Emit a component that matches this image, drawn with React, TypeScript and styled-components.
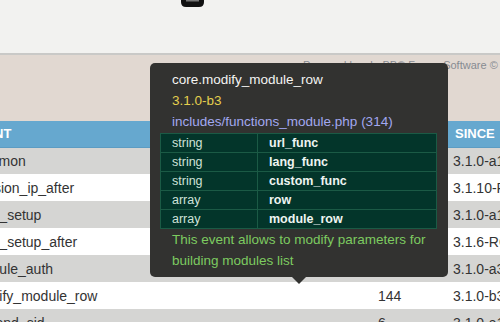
import React from "react";
import styled, { createGlobalStyle } from "styled-components";

const GlobalStyle = createGlobalStyle`
  html, body {
    margin: 0;
    padding: 0;
    overflow: hidden;
    background: #ffffff;
    font-family: "Liberation Sans", Arial, Helvetica, sans-serif;
  }
`;

const Page = styled.div`
  position: relative;
  width: 500px;
  height: 322px;
  overflow: hidden;
`;

const TopBar = styled.div`
  height: 53px;
  background: #f2f2f0;
  border-bottom: 2px solid #c9c9c7;
  padding-left: 181px;
  display: flex;
  align-items: flex-start;
`;

const Footer = styled.div`
  height: 66px;
  box-sizing: border-box;
  background: #e1d8d1;
  padding: 3px 0 0 303px;
  font-size: 11px;
  line-height: 14px;
  color: #878b91;
  white-space: nowrap;
`;

const TableWrap = styled.div`
  margin-left: -67px;
`;

const EventsTable = styled.table`
  border-collapse: collapse;
  table-layout: fixed;
  width: 620px;
  font-size: 14px;
  color: #333333;
`;

const HeadCell = styled.th<{ $pad?: number; $w: number }>`
  width: ${(p) => p.$w}px;
  height: 26px;
  padding: 0 0 0 ${(p) => p.$pad ?? 8}px;
  background: #66a8cf;
  border-bottom: 1px solid #5c9cc3;
  color: #ffffff;
  font-size: 13px;
  font-weight: bold;
  text-align: left;
  box-sizing: border-box;
  white-space: nowrap;
`;

const Row = styled.tr<{ $alt: boolean }>`
  background: ${(p) => (p.$alt ? "#ffffff" : "#d5d5d3")};
`;

const Cell = styled.td`
  height: 27px;
  padding: 0 0 0 8px;
  white-space: nowrap;
  overflow: hidden;
  box-sizing: border-box;
`;

const Tooltip = styled.div`
  position: absolute;
  left: 150px;
  top: 63px;
  width: 298px;
  box-sizing: border-box;
  padding: 6px 11px 6px 10px;
  background: #323230;
  border-radius: 5px;
  font-size: 13.5px;
  line-height: 21px;

  &::after {
    content: "";
    position: absolute;
    left: 142px;
    bottom: -7px;
    border-left: 7px solid transparent;
    border-right: 7px solid transparent;
    border-top: 7px solid #323230;
  }
`;

const TipLine = styled.div<{ $color: string }>`
  padding-left: 12px;
  color: ${(p) => p.$color};
  white-space: nowrap;
`;

const TipText = styled.div`
  padding-left: 12px;
  color: #7dcb60;
`;

const ParamTable = styled.table`
  margin-top: 1px;
  width: 277px;
  border-collapse: collapse;
  background: #03352a;
  font-size: 12.5px;
  table-layout: fixed;
`;

const ParamCell = styled.td<{ $name?: boolean }>`
  width: ${(p) => (p.$name ? "auto" : "97px")};
  height: 19px;
  box-sizing: border-box;
  padding: 0 0 0 11px;
  border: 1px solid #1b5a45;
  color: ${(p) => (p.$name ? "#eef4f1" : "#cfe2d9")};
  font-weight: ${(p) => (p.$name ? "bold" : "normal")};
  line-height: 16px;
`;

const events = [
  { name: "core.common", line: "24", since: "3.1.0-a1" },
  { name: "core.session_ip_after", line: "312", since: "3.1.10-RC1" },
  { name: "core.user_setup", line: "1934", since: "3.1.0-a1" },
  { name: "core.user_setup_after", line: "2092", since: "3.1.6-RC1" },
  { name: "core.module_auth", line: "378", since: "3.1.0-a3" },
  { name: "core.modify_module_row", line: "144", since: "3.1.0-b3" },
  { name: "core.append_sid", line: "6", since: "3.1.0-a1" },
];

const params = [
  ["string", "url_func"],
  ["string", "lang_func"],
  ["string", "custom_func"],
  ["array", "row"],
  ["array", "module_row"],
];

function Logo() {
  return (
    <svg width="23" height="7" viewBox="0 0 23 7">
      <path d="M0 0 H23 V2 Q23 7 18 7 H5 Q0 7 0 2 Z" fill="#111" />
      <rect x="5" y="0" width="13" height="1.5" fill="#777" />
    </svg>
  );
}

export default function App() {
  return (
    <Page>
      <GlobalStyle />
      <TopBar>
        <Logo />
      </TopBar>
      <Footer>Powered by phpBB® Forum Software © phpBB Limited</Footer>
      <TableWrap>
        <EventsTable>
          <thead>
            <tr>
              <HeadCell $w={437} $pad={35}>EVENT</HeadCell>
              <HeadCell $w={75}>LINE</HeadCell>
              <HeadCell $w={108} $pad={10}>SINCE</HeadCell>
            </tr>
          </thead>
          <tbody>
            {events.map((e, i) => (
              <Row key={e.name} $alt={i % 2 === 1}>
                <Cell>{e.name}</Cell>
                <Cell>{e.line}</Cell>
                <Cell>{e.since}</Cell>
              </Row>
            ))}
          </tbody>
        </EventsTable>
      </TableWrap>
      <Tooltip>
        <TipLine $color="#f4f4f2">core.modify_module_row</TipLine>
        <TipLine $color="#e4cf4e">3.1.0-b3</TipLine>
        <TipLine $color="#a2a8f0">includes/functions_module.php (314)</TipLine>
        <ParamTable>
          <tbody>
            {params.map(([type, name]) => (
              <tr key={name}>
                <ParamCell>{type}</ParamCell>
                <ParamCell $name>{name}</ParamCell>
              </tr>
            ))}
          </tbody>
        </ParamTable>
        <TipText>This event allows to modify parameters for building modules list</TipText>
      </Tooltip>
    </Page>
  );
}
